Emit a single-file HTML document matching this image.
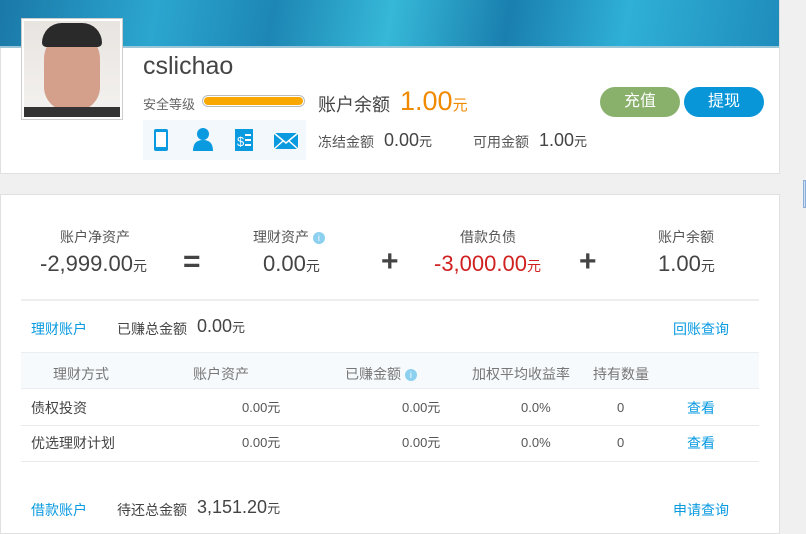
<!DOCTYPE html>
<html><head><meta charset="utf-8"><style>
*{margin:0;padding:0;box-sizing:border-box}
body{width:806px;height:525px;overflow:hidden;background:#f0f0f0;font-family:"Liberation Sans","Noto Sans CJK SC",sans-serif;color:#555;position:relative}
.a{position:absolute;white-space:nowrap}
.card{position:absolute;background:#fff;border:1px solid #e0e0e0}
.blue{color:#0a9ae0}
.y{font-size:13px;line-height:16px}
.r{line-height:16px}
.op{font-size:30px;color:#444;font-weight:bold}
</style></head><body>
<div class="card" style="left:0;top:0;width:780px;height:174px"></div>
<div class="a" style="left:0;top:0;width:779px;height:47px;background:linear-gradient(100deg,#1a78a8 0%,#2ba6cf 20%,#1d86b4 35%,#36b8d8 50%,#1a7fae 65%,#2fb0d6 80%,#1f8cbc 100%)"></div>
<div class="a" style="left:0;top:46px;width:779px;height:2px;background:#9ac6d8"></div>
<div class="a" style="left:21px;top:18px;height:102px;border:1px solid #ccc;background:#fff;padding:2px;width:102px">
<div style="width:96px;height:96px;background:linear-gradient(#e8e4e0,#f4f2f0);position:relative;overflow:hidden">
<div style="position:absolute;left:20px;top:10px;width:56px;height:80px;border-radius:28px 28px 24px 24px;background:#d4a08c"></div>
<div style="position:absolute;left:18px;top:2px;width:60px;height:24px;background:#2a2a2a;border-radius:28px 28px 6px 6px"></div>
<div style="position:absolute;left:0;bottom:0;width:96px;height:10px;background:#333"></div></div></div>
<div class="a" style="left:143px;top:52px;font-size:25px;color:#444">cslichao</div>
<div class="a" style="left:143px;top:94px;font-size:13px;color:#666">安全等级</div>
<div class="a" style="left:202px;top:95px;width:103px;height:12px;border:1px solid #bbb;border-radius:6px;padding:1px"><div style="height:8px;background:#f9a800;border-radius:4px"></div></div>
<div class="a" style="left:318px;top:91px;font-size:18px;color:#444">账户余额</div>
<div class="a" style="left:400px;top:86px;font-size:27px;color:#f08a00">1.00<span style="font-size:15px">元</span></div>
<div class="a" style="left:600px;top:87px;width:80px;height:30px;border-radius:15px;background:#8ab16c;color:#fff;font-size:16px;text-align:center;line-height:30px">充值</div>
<div class="a" style="left:684px;top:87px;width:80px;height:30px;border-radius:15px;background:#0996d8;color:#fff;font-size:16px;text-align:center;line-height:30px">提现</div>
<div class="a" style="left:143px;top:120px;width:163px;height:40px;background:#f2f8fc"></div>
<svg class="a" style="left:143px;top:120px" width="163" height="40">
<rect x="11" y="9" width="14" height="22" rx="2" fill="#0a9ae0"/><rect x="13" y="12" width="10" height="15" fill="#fff"/>
<circle cx="60" cy="14" r="6" fill="#0a9ae0"/><path d="M50 31 Q50 20 60 20 Q70 20 70 31Z" fill="#0a9ae0"/>
<rect x="92" y="9" width="18" height="22" fill="#0a9ae0"/><text x="94" y="26" font-size="13" fill="#fff" font-family="Liberation Sans">$</text><rect x="102" y="14" width="6" height="2" fill="#fff"/><rect x="102" y="19" width="6" height="2" fill="#fff"/><rect x="102" y="24" width="6" height="2" fill="#fff"/>
<rect x="131" y="13" width="24" height="16" fill="#0a9ae0"/><path d="M131 13 L143 23 L155 13 M131 29 L140 21 M155 29 L146 21" stroke="#fff" stroke-width="1.5" fill="none"/>
</svg>
<div class="a" style="left:318px;top:132px;font-size:14px;color:#555">冻结金额</div>
<div class="a" style="left:384px;top:130px;font-size:18px;color:#444">0.00<span style="font-size:13px">元</span></div>
<div class="a" style="left:473px;top:132px;font-size:14px;color:#555">可用金额</div>
<div class="a" style="left:539px;top:130px;font-size:18px;color:#444">1.00<span style="font-size:13px">元</span></div>
<div class="a" style="left:803px;top:180px;width:3px;height:28px;background:#cfe0f4;border:1px solid #8aaed8"></div>

<div class="card" style="left:0;top:194px;width:780px;height:340px"></div>
<div class="a" style="left:60px;top:227px;font-size:14px;color:#555">账户净资产</div>
<div class="a" style="left:40px;top:251px;font-size:22px;color:#444">-2,999.00<span style="font-size:14px">元</span></div>
<div class="a op" style="left:183px;top:245px">=</div>
<div class="a" style="left:253px;top:227px;font-size:14px;color:#555">理财资产 <span style="display:inline-block;width:12px;height:12px;border-radius:6px;background:#8cd0f0;color:#fff;font-size:9px;text-align:center;line-height:12px;vertical-align:1px">i</span></div>
<div class="a" style="left:263px;top:251px;font-size:22px;color:#444">0.00<span style="font-size:14px">元</span></div>
<div class="a op" style="left:381px;top:245px">+</div>
<div class="a" style="left:460px;top:227px;font-size:14px;color:#555">借款负债</div>
<div class="a" style="left:434px;top:251px;font-size:22px;color:#d02020">-3,000.00<span style="font-size:14px">元</span></div>
<div class="a op" style="left:579px;top:245px">+</div>
<div class="a" style="left:658px;top:227px;font-size:14px;color:#555">账户余额</div>
<div class="a" style="left:658px;top:251px;font-size:22px;color:#444">1.00<span style="font-size:14px">元</span></div>
<div class="a" style="left:21px;top:299px;width:738px;height:2px;background:#eee"></div>
<div class="a blue" style="left:31px;top:319px;font-size:14px">理财账户</div>
<div class="a" style="left:117px;top:319px;font-size:14px;color:#444">已赚总金额</div>
<div class="a" style="left:197px;top:316px;font-size:18px;color:#444">0.00<span style="font-size:13px">元</span></div>
<div class="a blue" style="left:673px;top:319px;font-size:14px">回账查询</div>
<div class="a" style="left:21px;top:352px;width:738px;height:37px;background:#f6fafd;border-top:1px solid #eaeef2;border-bottom:1px solid #eaeef2"></div>
<div class="a" style="left:53px;top:364px;font-size:14px;color:#777">理财方式</div>
<div class="a" style="left:193px;top:364px;font-size:14px;color:#777">账户资产</div>
<div class="a" style="left:345px;top:364px;font-size:14px;color:#777">已赚金额 <span style="display:inline-block;width:12px;height:12px;border-radius:6px;background:#8cd0f0;color:#fff;font-size:9px;text-align:center;line-height:12px;vertical-align:1px">i</span></div>
<div class="a" style="left:472px;top:364px;font-size:14px;color:#777">加权平均收益率</div>
<div class="a" style="left:593px;top:364px;font-size:14px;color:#777">持有数量</div>
<div class="a r" style="left:31px;top:400px;font-size:14px;color:#444">债权投资</div>
<div class="a y" style="left:242px;top:400px">0.00元</div>
<div class="a y" style="left:402px;top:400px">0.00元</div>
<div class="a y" style="left:521px;top:400px">0.0%</div>
<div class="a y" style="left:617px;top:400px">0</div>
<div class="a blue r" style="left:687px;top:400px;font-size:14px">查看</div>
<div class="a" style="left:21px;top:425px;width:738px;height:1px;background:#eaeaea"></div>
<div class="a r" style="left:31px;top:435px;font-size:14px;color:#444">优选理财计划</div>
<div class="a y" style="left:242px;top:435px">0.00元</div>
<div class="a y" style="left:402px;top:435px">0.00元</div>
<div class="a y" style="left:521px;top:435px">0.0%</div>
<div class="a y" style="left:617px;top:435px">0</div>
<div class="a blue r" style="left:687px;top:435px;font-size:14px">查看</div>
<div class="a" style="left:21px;top:461px;width:738px;height:1px;background:#eaeaea"></div>
<div class="a blue" style="left:31px;top:500px;font-size:14px">借款账户</div>
<div class="a" style="left:117px;top:500px;font-size:14px;color:#444">待还总金额</div>
<div class="a" style="left:197px;top:497px;font-size:18px;color:#444">3,151.20<span style="font-size:13px">元</span></div>
<div class="a blue" style="left:673px;top:500px;font-size:14px">申请查询</div>
</body></html>
